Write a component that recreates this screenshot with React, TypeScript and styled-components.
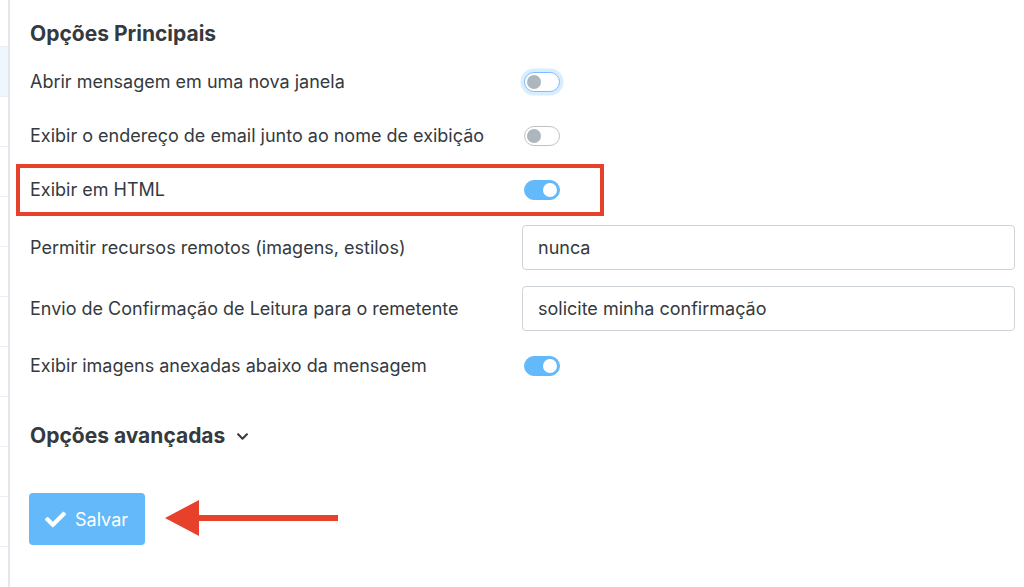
import React from "react";
import styled, { createGlobalStyle } from "styled-components";
import { FaCheck, FaChevronDown } from "react-icons/fa";

const GlobalStyle = createGlobalStyle`
	html, body {
		margin: 0;
		padding: 0;
		background: #ffffff;
	}
	body {
		font-family: Inter, Roboto, "Liberation Sans", sans-serif;
		color: #343a40;
	}
`;

type Option =
	| { label: string; kind: "toggle"; on: boolean; focused?: boolean; highlight?: boolean }
	| { label: string; kind: "select"; value: string };

const options: Option[] = [
	{ label: "Abrir mensagem em uma nova janela", kind: "toggle", on: false, focused: true },
	{ label: "Exibir o endereço de email junto ao nome de exibição", kind: "toggle", on: false },
	{ label: "Exibir em HTML", kind: "toggle", on: true, highlight: true },
	{ label: "Permitir recursos remotos (imagens, estilos)", kind: "select", value: "nunca" },
	{ label: "Envio de Confirmação de Leitura para o remetente", kind: "select", value: "solicite minha confirmação" },
	{ label: "Exibir imagens anexadas abaixo da mensagem", kind: "toggle", on: true },
];

const Toggle = ({ on, focused }: { on: boolean; focused?: boolean }) => (
	<Switch $on={on} $focused={focused}>
		<Knob $on={on} />
	</Switch>
);

const OptionRow = ({ option }: { option: Option }) => (
	<Row>
		<Label>{option.label}</Label>
		<Control>
			{option.kind === "toggle" ? (
				<Toggle on={option.on} focused={option.focused} />
			) : (
				<Select>{option.value}</Select>
			)}
		</Control>
	</Row>
);

const App = () => {
	return (
		<>
			<GlobalStyle />
			<Page>
				<Sidebar>
					{Array.from({ length: 11 }).map((_, i) => (
						<SideCell key={i} $first={i === 0} $active={i === 1} />
					))}
				</Sidebar>
				<Main>
					<Heading>Opções Principais</Heading>
					<Options>
						{options.map((option) =>
							option.kind === "toggle" && option.highlight ? (
								<Highlight key={option.label}>
									<OptionRow option={option} />
								</Highlight>
							) : (
								<OptionRow key={option.label} option={option} />
							)
						)}
					</Options>
					<Advanced>
						Opções avançadas
						<FaChevronDown size={13} />
					</Advanced>
					<Footer>
						<SaveButton>
							<FaCheck size={21} />
							Salvar
						</SaveButton>
						<Arrow width="174" height="40" viewBox="0 0 174 40">
							<polygon points="0,19 34,1 34,37" fill="#e8412b" />
							<rect x="30" y="16" width="143" height="6" fill="#e8412b" />
						</Arrow>
					</Footer>
				</Main>
			</Page>
		</>
	);
};

export default App;

const Page = styled.div`
	display: flex;
	min-height: 100vh;
`;

const Sidebar = styled.div`
	flex: 0 0 8px;
	border-right: 2px solid #e3e7eb;
	display: flex;
	flex-direction: column;
	overflow: hidden;
`;

const SideCell = styled.div<{ $first?: boolean; $active?: boolean }>`
	flex: 0 0 ${(p) => (p.$first ? "46px" : "49px")};
	border-bottom: 1px solid #eceff2;
	background: ${(p) => (p.$active ? "#eef7fd" : "transparent")};
`;

const Main = styled.div`
	flex: 1;
	padding: 20px 9px 0 20px;
`;

const Heading = styled.h2`
	margin: 0 0 15px;
	font-size: 21px;
	line-height: 28px;
	font-weight: 700;
	color: #343a40;
`;

const Options = styled.div`
	display: flex;
	flex-direction: column;
	gap: 16px;
`;

const Row = styled.div`
	display: flex;
	align-items: center;
	min-height: 38px;
`;

const Highlight = styled.div`
	margin: -7px 0 -7px -14px;
	padding: 3px 0 3px 10px;
	width: 570px;
	border: 4px solid #e8412b;
`;

const Label = styled.div`
	flex: 0 0 492px;
	font-size: 18px;
	line-height: 24px;
	color: #343a40;
`;

const Control = styled.div`
	flex: 1;
	display: flex;
	align-items: center;
`;

const Switch = styled.div<{ $on: boolean; $focused?: boolean }>`
	position: relative;
	margin-left: 2px;
	width: 36px;
	height: 20px;
	box-sizing: border-box;
	border-radius: 10px;
	border: 1px solid ${(p) => (p.$on ? "#63b9f9" : p.$focused ? "#80bdff" : "#bfc3c8")};
	background: ${(p) => (p.$on ? "#63b9f9" : "#ffffff")};
	box-shadow: ${(p) => (p.$focused ? "0 0 0 3.5px rgba(99, 185, 249, 0.25)" : "none")};
`;

const Knob = styled.span<{ $on: boolean }>`
	position: absolute;
	top: 2px;
	left: ${(p) => (p.$on ? "18px" : "2px")};
	width: 14px;
	height: 14px;
	border-radius: 50%;
	background: ${(p) => (p.$on ? "#ffffff" : "#adb5bd")};
`;

const Select = styled.div`
	flex: 1;
	height: 45px;
	box-sizing: border-box;
	display: flex;
	align-items: center;
	padding: 0 15px;
	border: 1px solid #ced4da;
	border-radius: 4px;
	font-size: 18px;
	color: #343a40;
`;

const Advanced = styled.h2`
	display: flex;
	align-items: center;
	gap: 11px;
	margin: 37px 0 0;
	font-size: 21px;
	line-height: 28px;
	font-weight: 700;
	color: #343a40;
`;

const Footer = styled.div`
	display: flex;
	align-items: center;
	gap: 20px;
	margin-top: 43px;
`;

const SaveButton = styled.button`
	display: flex;
	align-items: center;
	gap: 9px;
	height: 52px;
	padding: 0 17px 0 16px;
	margin-left: -1px;
	border: none;
	border-radius: 4px;
	background: #63b9f9;
	color: #ffffff;
	font-family: Inter, Roboto, "Liberation Sans", sans-serif;
	font-size: 18px;
`;

const Arrow = styled.svg`
	display: block;
`;
